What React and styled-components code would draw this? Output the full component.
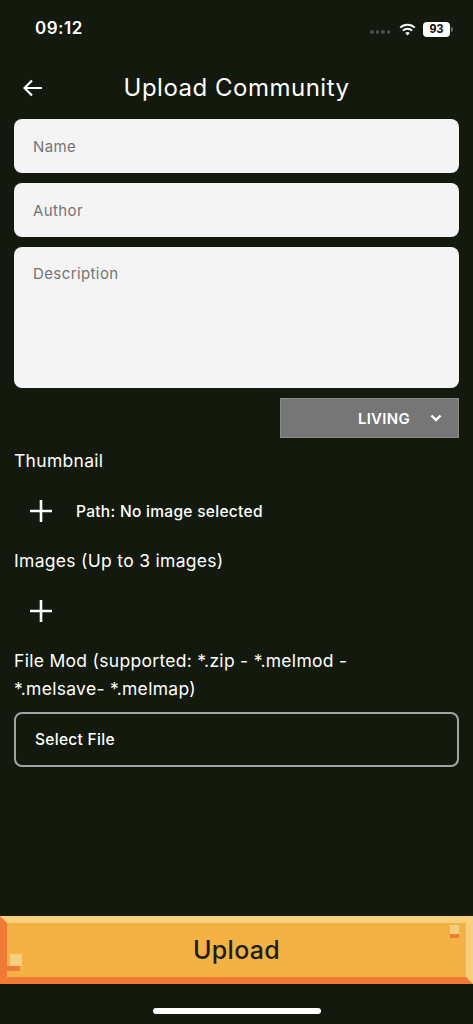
import React from "react";
import styled, { createGlobalStyle } from "styled-components";

const Global = createGlobalStyle`
  html, body { margin: 0; padding: 0; background: #13190c; }
  body { font-family: Inter, "Noto Sans", Roboto, sans-serif; color: #fff; }
  * { box-sizing: border-box; }
`;

const Page = styled.div`
  width: 473px;
  min-height: 1024px;
  display: flex;
  flex-direction: column;
  background: #13190c;
`;

const StatusBar = styled.div`
  height: 56px;
  display: flex;
  align-items: center;
  justify-content: space-between;
  padding: 0 20px 0 35px;
`;

const Time = styled.span`
  font-size: 17px;
  font-weight: 600;
  letter-spacing: 0.5px;
`;

const StatusIcons = styled.div`
  display: flex;
  align-items: center;
  gap: 7px;
  padding-top: 2px;
`;

const Dots = styled.div`
  display: flex;
  gap: 2px;
  margin-right: 2px;
  padding-top: 6px;
`;

const Dot = styled.span`
  width: 3.5px;
  height: 3.5px;
  border-radius: 50%;
  background: #4a4d47;
`;

const Battery = styled.div`
  display: flex;
  align-items: center;
  gap: 1px;
`;

const BatteryBody = styled.span`
  width: 27px;
  height: 15px;
  border-radius: 4px;
  background: #fff;
  color: #111;
  font-size: 12.5px;
  font-weight: 800;
  display: flex;
  align-items: center;
  justify-content: center;
  font-family: "Liberation Sans", Arial, sans-serif;
`;

const BatteryCap = styled.span`
  width: 2px;
  height: 5px;
  border-radius: 0 2px 2px 0;
  background: #6a6a6a;
`;

const Header = styled.div`
  height: 63px;
  display: flex;
  align-items: center;
  padding-left: 22px;
`;

const BackButton = styled.div`
  width: 22px;
  height: 22px;
  display: flex;
  align-items: center;
  justify-content: center;
`;

const Title = styled.h1`
  flex: 1;
  margin: 0 0 0 -44px;
  text-align: center;
  font-size: 24px;
  font-weight: 400;
  color: #fff;
  letter-spacing: 0.5px;
`;

const Form = styled.div`
  display: flex;
  flex-direction: column;
  padding: 0 14px;
`;

const Field = styled.div`
  height: ${(p) => p.$h}px;
  margin-bottom: 10px;
  background: #f4f4f4;
  border-radius: 8px;
  padding: ${(p) => (p.$multi ? "17px 19px" : "0 19px")};
  display: flex;
  align-items: ${(p) => (p.$multi ? "flex-start" : "center")};
  color: #747474;
  font-size: 15px;
  letter-spacing: 0.4px;
`;

const DropdownRow = styled.div`
  display: flex;
  justify-content: flex-end;
`;

const Dropdown = styled.div`
  width: 179px;
  height: 40px;
  background: #767676;
  border: 1px solid #8a8a8a;
  display: flex;
  align-items: center;
  justify-content: flex-end;
  padding-right: 16px;
  gap: 20px;
  font-size: 15px;
  font-weight: 600;
  color: #fff;
  letter-spacing: 0.3px;
`;

const Label = styled.div`
  margin-top: ${(p) => p.$mt}px;
  font-size: 17.5px;
  letter-spacing: 0.3px;
  line-height: ${(p) => p.$lh || 24}px;
  color: #fff;
  max-width: ${(p) => p.$max || "none"};
`;

const AddRow = styled.div`
  height: 44px;
  margin-top: 16px;
  display: flex;
  align-items: center;
  padding-left: 16px;
  gap: 24px;
`;

const PathText = styled.span`
  font-size: 15.5px;
  font-weight: 500;
  letter-spacing: 0.3px;
  color: #fff;
`;

const SelectFile = styled.div`
  margin-top: 9px;
  height: 55px;
  border: 2px solid #a3a3a3;
  border-radius: 8px;
  display: flex;
  align-items: center;
  padding-left: 19px;
  font-size: 15.5px;
  font-weight: 500;
  letter-spacing: 0.3px;
  color: #fff;
`;

const Spacer = styled.div`
  flex: 1;
`;

const UploadButton = styled.button`
  position: relative;
  width: 473px;
  height: 68px;
  margin: 0;
  padding: 0;
  background: #f3b243;
  border-style: solid;
  border-width: 7px;
  border-color: #f7cf7d #f7cf7d #ef7b35 #ef7b35;
  font-family: Inter, "Noto Sans", sans-serif;
  font-size: 25px;
  font-weight: 500;
  letter-spacing: 0.3px;
  color: #1b1d1a;
  display: flex;
  align-items: center;
  justify-content: center;
`;

const Pixel = styled.span`
  position: absolute;
  background: ${(p) => p.$c};
  left: ${(p) => p.$x}px;
  top: ${(p) => p.$y}px;
  width: ${(p) => p.$w}px;
  height: ${(p) => p.$h}px;
`;

const HomeArea = styled.div`
  height: 40px;
  display: flex;
  justify-content: center;
  align-items: flex-start;
  padding-top: 24px;
`;

const HomeBar = styled.span`
  width: 168px;
  height: 6px;
  border-radius: 3px;
  background: #fff;
`;

const PlusIcon = () => (
  <svg width="22" height="22" viewBox="0 0 22 22">
    <path d="M11 0v22M0 11h22" stroke="#fff" strokeWidth="2.6" />
  </svg>
);

export default function App() {
  return (
    <Page>
      <Global />
      <StatusBar>
        <Time>09:12</Time>
        <StatusIcons>
          <Dots>
            <Dot />
            <Dot />
            <Dot />
            <Dot />
          </Dots>
          <svg width="17" height="13" viewBox="0 0 17 13">
            <path d="M8.5 12.5 L6.2 10 A3.3 3.3 0 0 1 10.8 10 Z" fill="#fff" />
            <path d="M3.9 7.6 A6.6 6.6 0 0 1 13.1 7.6" stroke="#fff" strokeWidth="2" fill="none" />
            <path d="M1.2 4.6 A10.5 10.5 0 0 1 15.8 4.6" stroke="#fff" strokeWidth="2" fill="none" />
          </svg>
          <Battery>
            <BatteryBody>93</BatteryBody>
            <BatteryCap />
          </Battery>
        </StatusIcons>
      </StatusBar>

      <Header>
        <BackButton>
          <svg width="20" height="18" viewBox="0 0 20 18">
            <path d="M19 9H2M9 1.5L1.5 9L9 16.5" stroke="#fff" strokeWidth="2.2" fill="none" />
          </svg>
        </BackButton>
        <Title>Upload Community</Title>
      </Header>

      <Form>
        <Field $h={54}>Name</Field>
        <Field $h={54}>Author</Field>
        <Field $h={141} $multi>Description</Field>
        <DropdownRow>
          <Dropdown>
            <span>LIVING</span>
            <svg width="12" height="8" viewBox="0 0 12 8">
              <path d="M1.5 1.5L6 6L10.5 1.5" stroke="#fff" strokeWidth="2.4" fill="none" />
            </svg>
          </Dropdown>
        </DropdownRow>

        <Label $mt={11}>Thumbnail</Label>
        <AddRow>
          <PlusIcon />
          <PathText>Path: No image selected</PathText>
        </AddRow>

        <Label $mt={16}>Images (Up to 3 images)</Label>
        <AddRow>
          <PlusIcon />
        </AddRow>

        <Label $mt={14} $lh={28} $max="380px">
          File Mod (supported: *.zip - *.melmod - *.melsave- *.melmap)
        </Label>
        <SelectFile>Select File</SelectFile>
      </Form>

      <Spacer />

      <UploadButton>
        Upload
        <Pixel $c="#f7cf7d" $x={3} $y={31} $w={12} $h={12} />
        <Pixel $c="#ef7b35" $x={0} $y={43} $w={13} $h={5} />
        <Pixel $c="#f7cf7d" $x={443} $y={2} $w={9} $h={9} />
        <Pixel $c="#ef7b35" $x={443} $y={11} $w={9} $h={4} />
      </UploadButton>
      <HomeArea>
        <HomeBar />
      </HomeArea>
    </Page>
  );
}
